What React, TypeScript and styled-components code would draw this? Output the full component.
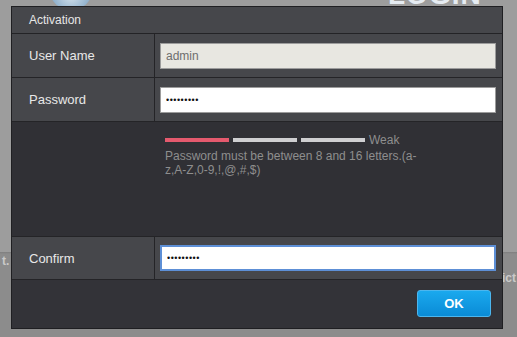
import * as React from 'react';
import styled, { createGlobalStyle } from 'styled-components';

const Global = createGlobalStyle`
    html, body {
        margin: 0;
        padding: 0;
        background: #8f8f8f;
        font-family: "Liberation Sans", Arial, sans-serif;
    }
`;

const Page = styled.div`
    position: relative;
    width: 517px;
    height: 337px;
    overflow: hidden;
    background: linear-gradient(#9d9d9d 0, #9d9d9d 252px, #7e7e7e 252px, #8c8c8c 254px, #8c8c8c 100%);
`;

const Logo = styled.div`
    position: absolute;
    left: 50px;
    top: -28px;
    width: 42px;
    height: 38px;
    border-radius: 50%;
    background: radial-gradient(circle at 50% 60%, #d8e4ee 0, #8fb0cc 60%, #6f8fab 100%);
`;

const LoginTitle = styled.div`
    position: absolute;
    left: 388px;
    top: -21px;
    font-family: "Liberation Sans", Arial, sans-serif;
    font-weight: bold;
    font-size: 28px;
    letter-spacing: 1px;
    color: #e6ecf2;
`;

const SideText = styled.span<{ $left?: number; $right?: number; $top: number }>`
    position: absolute;
    ${p => (p.$left !== undefined ? `left: ${p.$left}px;` : `right: ${p.$right}px;`)}
    top: ${p => p.$top}px;
    font-size: 12px;
    font-weight: bold;
    color: #c9c9c9;
`;

const Dialog = styled.div`
    position: absolute;
    left: 11px;
    top: 6px;
    width: 490px;
    border: 1px solid #1f1f22;
    background: #333338;
    display: flex;
    flex-direction: column;
`;

const Header = styled.div`
    height: 26px;
    padding-left: 17px;
    display: flex;
    align-items: center;
    background: #46474b;
    border-bottom: 1px solid #232326;
    color: #e6e6e6;
    font-size: 12px;
`;

const Row = styled.div<{ $height: number; $dark?: boolean }>`
    display: grid;
    grid-template-columns: 143px 1fr;
    height: ${p => p.$height}px;
    background: ${p => (p.$dark ? '#303035' : '#46474b')};
    border-bottom: 1px solid #242427;
`;

const Label = styled.div`
    display: flex;
    align-items: center;
    padding-left: 17px;
    border-right: 1px solid #242427;
    color: #e8e8e8;
    font-size: 13px;
`;

const Cell = styled.div`
    display: flex;
    align-items: center;
    padding: 0 6px 0 5px;
`;

const Input = styled.input<{ $variant?: 'disabled' | 'focus' }>`
    box-sizing: border-box;
    width: 100%;
    height: 26px;
    padding: 0 5px;
    font-family: "Liberation Sans", Arial, sans-serif;
    font-size: 11px;
    color: ${p => (p.$variant === 'disabled' ? '#6e6e6e' : '#111')};
    background: ${p => (p.$variant === 'disabled' ? '#e8e7e1' : '#ffffff')};
    border: ${p => (p.$variant === 'focus' ? '2px solid #5d8fd6' : '1px solid #9c9c9c')};
    outline: none;
    border-radius: 0;
    &[type='password'] {
        font-size: 9px;
        letter-spacing: 0.5px;
    }
    &[type='text'] {
        font-size: 12px;
    }
`;

const Strength = styled.div`
    padding: 13px 0 0 10px;
    color: #8e8e8e;
    font-size: 12px;
`;

const Meter = styled.div`
    display: flex;
    align-items: center;
    gap: 4px;
    height: 10px;
`;

const Bar = styled.span<{ $color: string }>`
    width: 64px;
    height: 4px;
    background: ${p => p.$color};
`;

const Hint = styled.div`
    width: 262px;
    margin-top: 4px;
    line-height: 14px;
`;

const Footer = styled.div`
    height: 48px;
    display: flex;
    justify-content: flex-end;
    align-items: flex-start;
    padding: 10px 11px 0 0;
    box-sizing: border-box;
    background: #333338;
`;

const OkButton = styled.button`
    width: 74px;
    height: 27px;
    border: 1px solid #4cb6ee;
    border-radius: 3px;
    background: linear-gradient(#1aa9ee, #0a8bd6);
    color: #ffffff;
    font-family: "Liberation Sans", Arial, sans-serif;
    font-weight: bold;
    font-size: 13px;
    cursor: pointer;
`;

const App: React.FC = () => {
    return (
        <Page>
            <Global />
            <Logo />
            <LoginTitle>LOGIN</LoginTitle>
            <SideText $left={2} $top={254}>t.</SideText>
            <SideText $right={1} $top={271}>ict</SideText>
            <Dialog>
                <Header>Activation</Header>
                <Row $height={43}>
                    <Label>User Name</Label>
                    <Cell>
                        <Input type="text" $variant="disabled" value="admin" readOnly />
                    </Cell>
                </Row>
                <Row $height={43}>
                    <Label>Password</Label>
                    <Cell>
                        <Input type="password" value="123456789" readOnly />
                    </Cell>
                </Row>
                <Row $height={114} $dark>
                    <div />
                    <Strength>
                        <Meter>
                            <Bar $color="#e55a6e" />
                            <Bar $color="#cfcfd1" />
                            <Bar $color="#cfcfd1" />
                            <span>Weak</span>
                        </Meter>
                        <Hint>Password must be between 8 and 16 letters.(a-z,A-Z,0-9,!,@,#,$)</Hint>
                    </Strength>
                </Row>
                <Row $height={42}>
                    <Label>Confirm</Label>
                    <Cell>
                        <Input type="password" $variant="focus" value="123456789" readOnly />
                    </Cell>
                </Row>
                <Footer>
                    <OkButton>OK</OkButton>
                </Footer>
            </Dialog>
        </Page>
    );
};

export default App;
